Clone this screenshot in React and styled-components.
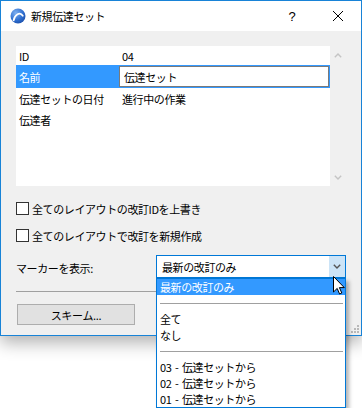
import React from 'react';
import styled, { createGlobalStyle } from 'styled-components';

const GlobalStyle = createGlobalStyle`
  html, body {
    margin: 0;
    padding: 0;
    background: #ffffff;
  }
  body {
    font-family: "Noto Sans CJK JP", "Noto Sans", sans-serif;
    font-size: 11px;
    color: #000;
  }
`;

const Stage = styled.div`
  position: relative;
  width: 362px;
  height: 408px;
  overflow: hidden;
  background: #fff;
`;

const Window = styled.div`
  position: relative;
  width: 362px;
  height: 336px;
  box-sizing: border-box;
  border: 1px solid #1883d7;
  background: #f0f0f0;
  display: flex;
  flex-direction: column;
  box-shadow: 0 7px 16px rgba(0, 0, 0, 0.3);
`;

const TitleBar = styled.div`
  height: 30px;
  background: #fff;
  display: flex;
  align-items: center;
  padding-left: 9px;
`;

const Title = styled.span`
  margin-left: 5px;
  font-size: 11px;
  letter-spacing: -0.4px;
  line-height: 30px;
`;

const CaptionButton = styled.div`
  width: 46px;
  height: 30px;
  display: flex;
  align-items: center;
  justify-content: center;
  margin-left: ${(p) => (p.first ? 'auto' : '0')};
  font-family: "Liberation Sans", sans-serif;
  font-size: 13px;
`;

const Body = styled.div`
  flex: 1;
  display: flex;
  flex-direction: column;
  padding: 15px 15px 0 15px;
`;

const ListBox = styled.div`
  display: flex;
  height: 140px;
`;

const Table = styled.div`
  width: 314px;
  background: #fff;
  display: flex;
  flex-direction: column;
`;

const Row = styled.div`
  height: ${(p) => p.h}px;
  display: flex;
  align-items: center;
  background: ${(p) => (p.selected ? '#3399ff' : 'transparent')};
  letter-spacing: -0.4px;
`;

const Label = styled.div`
  width: 103px;
  padding-left: 3px;
  box-sizing: border-box;
  color: ${(p) => (p.selected ? '#fff' : '#000')};
`;

const Value = styled.div`
  padding-left: 3px;
`;

const EditBox = styled.div`
  width: 210px;
  height: 21px;
  box-sizing: border-box;
  border: 1px solid #7a7a7a;
  background: #fff;
  padding-left: 4px;
  display: flex;
  align-items: center;
`;

const ScrollTrack = styled.div`
  width: 16px;
  display: flex;
  flex-direction: column;
  align-items: center;
  justify-content: space-between;
  padding: 7px 0 6px;
  box-sizing: border-box;
`;

const CheckRow = styled.label`
  display: flex;
  align-items: center;
  height: 13px;
  margin-top: ${(p) => p.mt}px;
  letter-spacing: -0.4px;
`;

const Box = styled.span`
  width: 13px;
  height: 13px;
  box-sizing: border-box;
  border: 1px solid #333;
  background: #fff;
  margin-right: 3px;
`;

const MarkerRow = styled.div`
  display: flex;
  align-items: center;
  margin-top: 13px;
  height: 23px;
  letter-spacing: -0.4px;
`;

const MarkerLabel = styled.div`
  width: 140px;
  padding-top: 3px;
`;

const Select = styled.div`
  width: 190px;
  height: 23px;
  box-sizing: border-box;
  border: 1px solid #0078d7;
  background: #fff;
  display: flex;
  align-items: center;
`;

const SelectText = styled.div`
  flex: 1;
  padding-left: 5px;
`;

const ArrowButton = styled.div`
  width: 16px;
  height: 100%;
  background: #cce4f7;
  display: flex;
  align-items: center;
  justify-content: center;
`;

const Divider = styled.div`
  height: 1px;
  background: #a0a0a0;
  margin-top: ${(p) => p.mt}px;
`;

const Button = styled.div`
  width: 118px;
  height: 21px;
  box-sizing: border-box;
  margin: 12px 0 0 1px;
  background: #e1e1e1;
  border: 1px solid #adadad;
  display: flex;
  align-items: center;
  justify-content: center;
  letter-spacing: -0.3px;
`;

const Grip = styled.svg`
  position: absolute;
  right: 2px;
  bottom: 2px;
`;

const DropList = styled.div`
  position: absolute;
  left: 156px;
  top: 278px;
  width: 190px;
  height: 130px;
  box-sizing: border-box;
  border: 1px solid #0078d7;
  background: #fff;
  box-shadow: 3px 3px 4px rgba(0, 0, 0, 0.3);
  display: flex;
  flex-direction: column;
`;

const Option = styled.div`
  height: 16px;
  line-height: 16px;
  padding-left: 3px;
  background: ${(p) => (p.selected ? '#3399ff' : 'transparent')};
  color: ${(p) => (p.selected ? '#fff' : '#000')};
  letter-spacing: -0.4px;
  word-spacing: 1.5px;
  white-space: nowrap;
`;

const OptionSep = styled.div`
  height: 16px;
  display: flex;
  align-items: center;
  padding: 0 2px 0 3px;
  &::after {
    content: '';
    flex: 1;
    height: 1px;
    background: #a0a0a0;
  }
`;

const Cursor = styled.svg`
  position: absolute;
  left: 333px;
  top: 276px;
`;

function AppIcon() {
  return (
    <svg width="16" height="16" viewBox="0 0 16 16">
      <defs>
        <radialGradient id="ball" cx="0.35" cy="0.3" r="0.8">
          <stop offset="0" stopColor="#7fb0f0" />
          <stop offset="0.6" stopColor="#2f6fd0" />
          <stop offset="1" stopColor="#1b4da8" />
        </radialGradient>
      </defs>
      <circle cx="8" cy="8" r="7.5" fill="url(#ball)" />
      <path d="M3.6 12.5 C4.6 6.5 10 3.2 12.8 7.8" fill="none" stroke="#fff" strokeWidth="1.7" strokeLinecap="round" />
    </svg>
  );
}

function Chevron({ up, color, w = 8 }) {
  return (
    <svg width={w} height="5" viewBox="0 0 8 5">
      <path d={up ? 'M0.8 4.2 L4 1 L7.2 4.2' : 'M0.8 0.8 L4 4 L7.2 0.8'} fill="none" stroke={color} strokeWidth="1.4" />
    </svg>
  );
}

const rows = [
  { label: 'ID', value: '04', h: 19 },
  { label: '名前', value: '伝達セット', h: 23, selected: true },
  { label: '伝達セットの日付', value: '進行中の作業', h: 21 },
  { label: '伝達者', value: '', h: 21 },
];

export default function App() {
  return (
    <Stage>
      <GlobalStyle />
      <Window>
        <TitleBar>
          <AppIcon />
          <Title>新規伝達セット</Title>
          <CaptionButton first>?</CaptionButton>
          <CaptionButton>
            <svg width="10" height="10" viewBox="0 0 10 10">
              <path d="M0 0 L10 10 M10 0 L0 10" stroke="#000" strokeWidth="1" />
            </svg>
          </CaptionButton>
        </TitleBar>
        <Body>
          <ListBox>
            <Table>
              {rows.map((r) => (
                <Row key={r.label} h={r.h} selected={r.selected}>
                  <Label selected={r.selected}>{r.label}</Label>
                  {r.selected ? <EditBox>{r.value}</EditBox> : <Value>{r.value}</Value>}
                </Row>
              ))}
            </Table>
            <ScrollTrack>
              <Chevron up color="#c4c4c4" />
              <Chevron color="#c4c4c4" />
            </ScrollTrack>
          </ListBox>
          <CheckRow mt={16}>
            <Box />
            全てのレイアウトの改訂IDを上書き
          </CheckRow>
          <CheckRow mt={14}>
            <Box />
            全てのレイアウトで改訂を新規作成
          </CheckRow>
          <MarkerRow>
            <MarkerLabel>マーカーを表示:</MarkerLabel>
            <Select>
              <SelectText>最新の改訂のみ</SelectText>
              <ArrowButton>
                <Chevron color="#555" />
              </ArrowButton>
            </Select>
          </MarkerRow>
          <Divider mt={13} />
          <Button>スキーム...</Button>
        </Body>
        <Grip width="9" height="9" viewBox="0 0 9 9">
          {[[7, 1], [7, 4], [4, 4], [7, 7], [4, 7], [1, 7]].map(([x, y]) => (
            <rect key={`${x}-${y}`} x={x} y={y} width="2" height="2" fill="#b8b8b8" />
          ))}
        </Grip>
      </Window>
      <DropList>
        <Option selected>最新の改訂のみ</Option>
        <OptionSep />
        <Option>全て</Option>
        <Option>なし</Option>
        <OptionSep />
        <Option>03 - 伝達セットから</Option>
        <Option>02 - 伝達セットから</Option>
        <Option>01 - 伝達セットから</Option>
      </DropList>
      <Cursor width="12" height="19" viewBox="0 0 12 19">
        <path d="M0.5 0.5 L0.5 16 L4.2 12.4 L6.6 18 L8.8 17 L6.4 11.6 L11.3 11.6 Z" fill="#fff" stroke="#000" strokeWidth="1" strokeLinejoin="miter" />
      </Cursor>
    </Stage>
  );
}
